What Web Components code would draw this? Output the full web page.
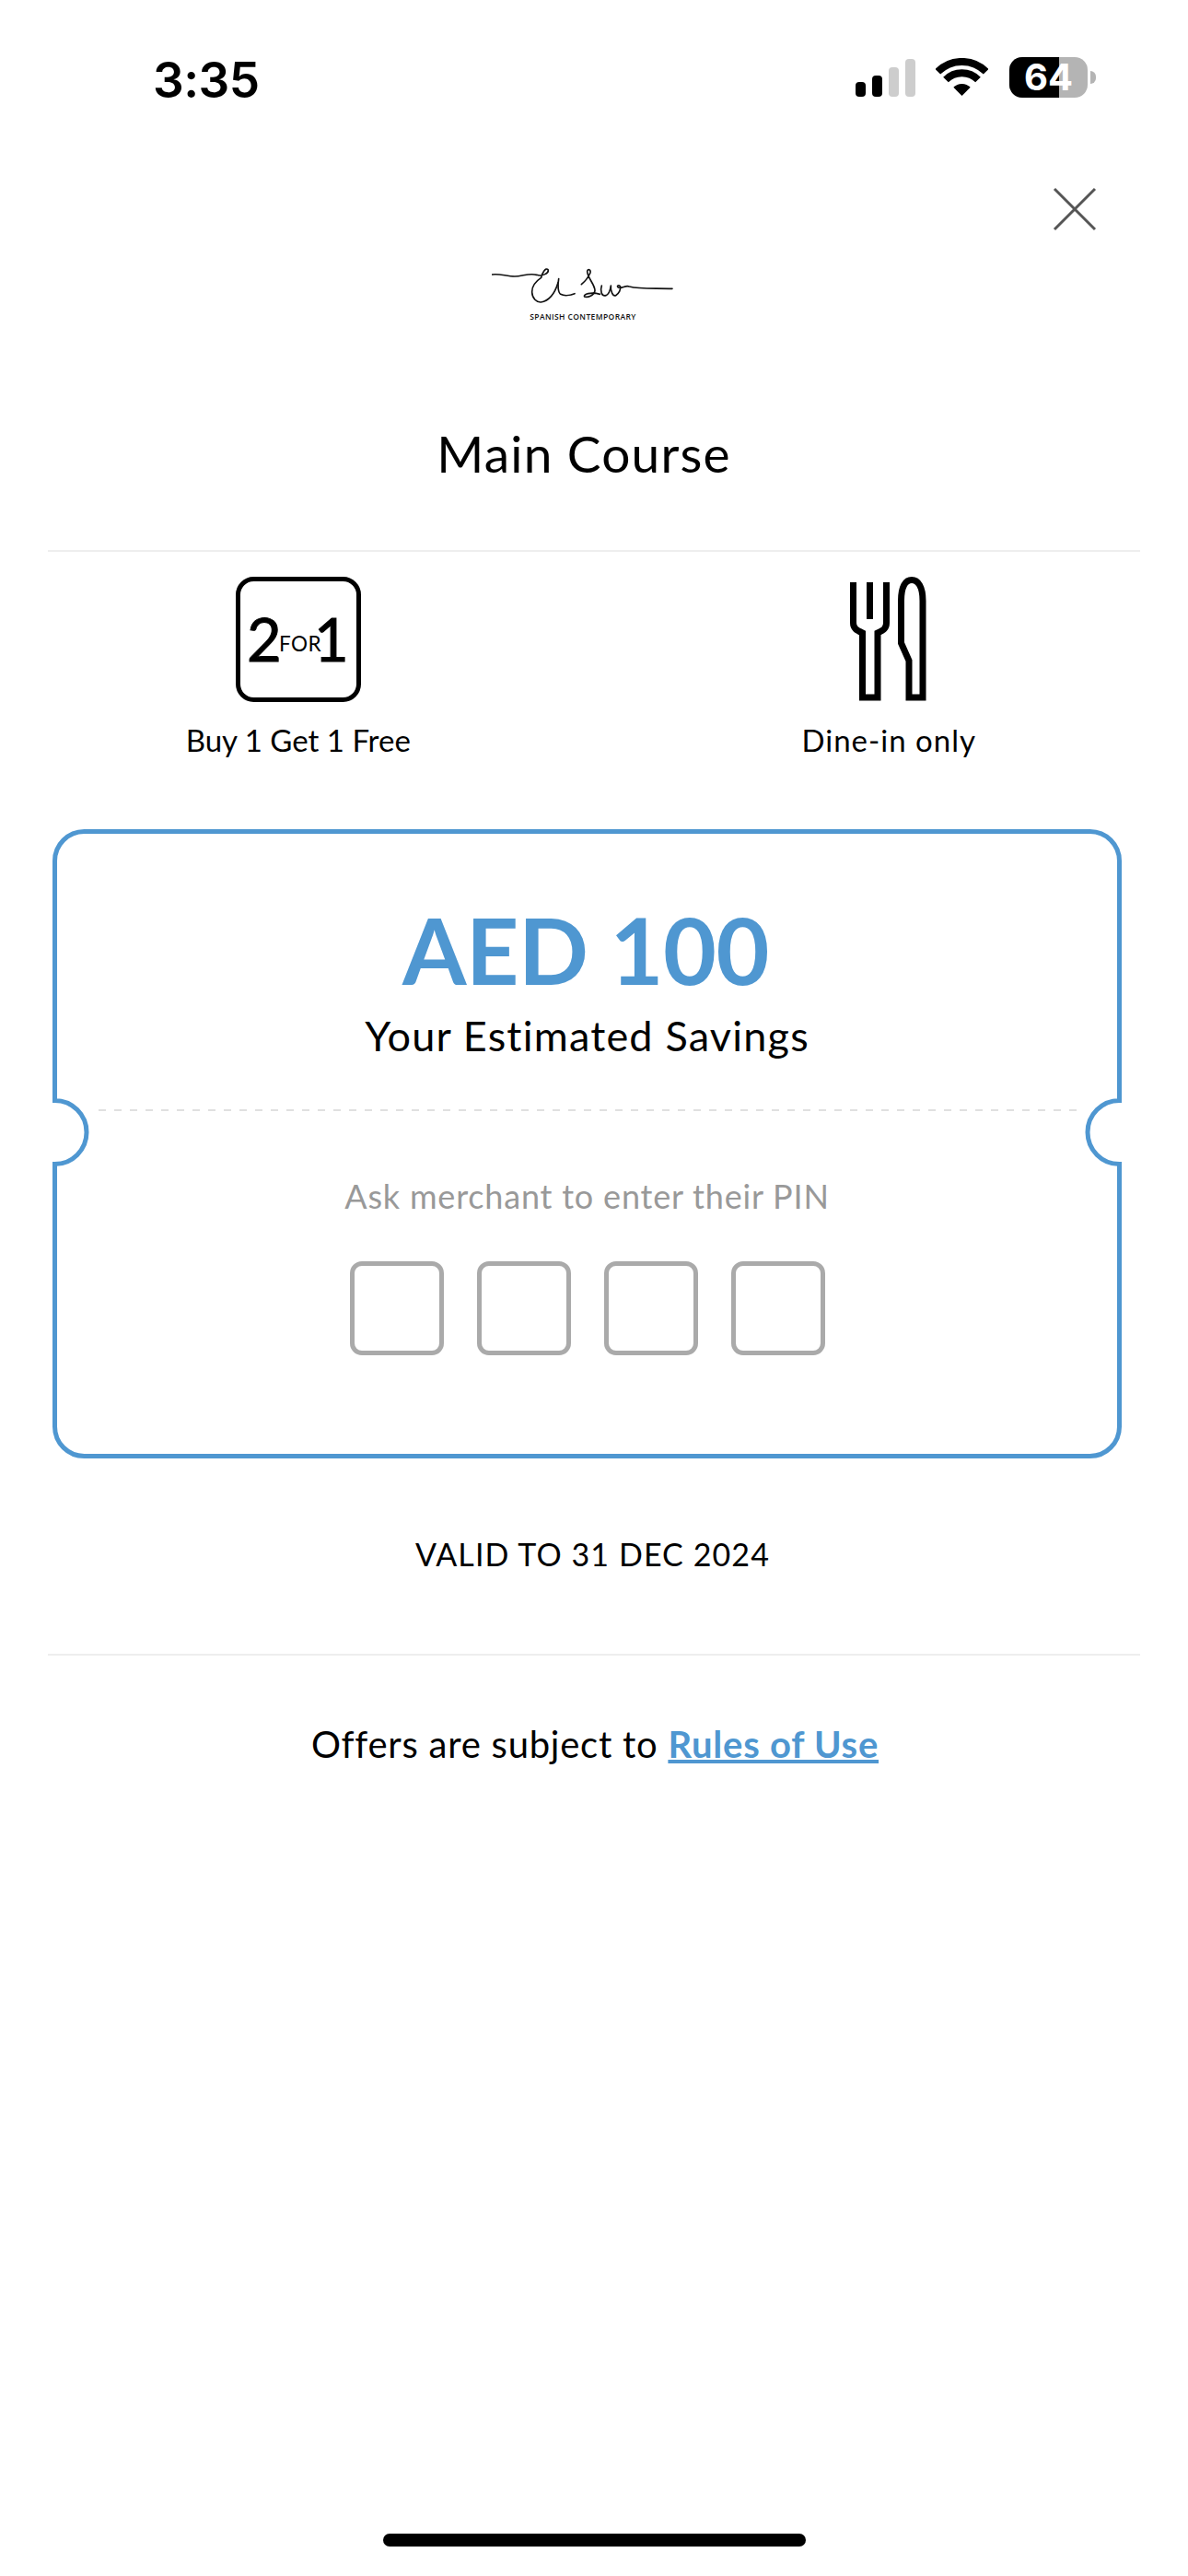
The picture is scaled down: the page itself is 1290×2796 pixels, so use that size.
<!DOCTYPE html>
<html lang="en">
<head>
<meta charset="utf-8">
<title>Main Course</title>
<style>
  html, body { margin: 0; background: #fff; }
  body { font-family: Lato, "Open Sans", sans-serif; color: #000; }
  offer-screen { width: 1290px; height: 2796px; }
</style>
</head>
<body>
<offer-screen>
  <status-bar time="3:35" battery="64"></status-bar>
  <offer-header title="Main Course"></offer-header>
  <offer-perks>
    <perk-item label="Buy 1 Get 1 Free">
      <svg width="136" height="136" viewBox="0 0 136 136">
        <rect x="2.500" y="2.500" width="131" height="131" rx="17" fill="none" stroke="#000" stroke-width="5"/>
        <text font-family="Lato, sans-serif" fill="#000" font-size="65" y="92"><tspan x="12" stroke="#000" stroke-width="1">2</tspan><tspan x="47" dy="-11" font-size="22.500" letter-spacing="0.500">FOR</tspan><tspan x="85" dy="11" stroke="#000" stroke-width="1">1</tspan></text>
      </svg>
    </perk-item>
    <perk-item label="Dine-in only" style="--label-spacing: 1px">
      <svg width="136" height="136" viewBox="0 0 136 136">
        <g fill="none" stroke="#000" stroke-width="7">
          <path d="M29.500 6V50C29.500 56 33 58 39.500 61V131H56V61C62.500 58 65.500 56 65.500 50V6"/>
          <path d="M47.500 6V46"/>
          <path d="M90 131V91L81.500 72V26C81.500 11 86 3.500 93 3.500C100 3.500 105 11 105 26V131Z"/>
        </g>
      </svg>
    </perk-item>
  </offer-perks>
  <offer-ticket amount="AED 100" caption="Your Estimated Savings" prompt="Ask merchant to enter their PIN">
    <pin-box></pin-box><pin-box></pin-box><pin-box></pin-box><pin-box></pin-box>
  </offer-ticket>
  <offer-footer valid="VALID TO 31 DEC 2024"></offer-footer>
  <home-indicator></home-indicator>
</offer-screen>

<script>
class OfferScreen extends HTMLElement {
  constructor() {
    super();
    this.attachShadow({ mode: 'open' });
    this.shadowRoot.innerHTML = `
      <style>
        :host { display: flex; flex-direction: column; position: relative; background: #fff; }
      </style>
      <slot></slot>
    `;
  }
}

class StatusBar extends HTMLElement {
  connectedCallback() {
    this.attachShadow({ mode: 'open' });
    this.shadowRoot.innerHTML = `
      <style>
        :host { display: flex; align-items: flex-start; justify-content: space-between; height: 120px; padding: 0 100px 0 166px; font-family: Inter, "Liberation Sans", sans-serif; }
        .time { font-size: 53px; font-weight: 600; line-height: 54px; margin-top: 60px; letter-spacing: -0.5px; }
        .icons { display: flex; align-items: flex-start; margin-top: 62px; }
        .signal { display: flex; align-items: flex-end; gap: 7px; height: 43px; margin-right: 22px; }
        .signal i { width: 11px; border-radius: 4px; background: #000; }
        .signal i.off { background: #cdcdcd; }
        .wifi { margin-top: 1px; margin-right: 23px; }
        .battery { position: relative; width: 85px; height: 44px; border-radius: 14px; background: #b4b4b4; color: #fff; font-size: 40px; font-weight: 700; line-height: 44px; }
        .battery b { position: absolute; left: 0; top: 0; bottom: 0; width: 54px; border-radius: 14px 0 0 14px; background: #000; }
        .battery span { position: relative; display: block; padding-left: 16px; }
        .tip { width: 6px; height: 14px; margin: 15px 0 0 3px; border-radius: 0 8px 8px 0; background: #b4b4b4; }
      </style>
      <div class="time">${this.getAttribute('time')}</div>
      <div class="icons">
        <div class="signal">
          <i style="height:16px"></i><i style="height:23px"></i><i class="off" style="height:32px"></i><i class="off" style="height:41px"></i>
        </div>
        <svg class="wifi" width="57" height="41" viewBox="0 0 57 41">
          <path d="M2.300 14.800A37 37 0 0 1 54.700 14.800M11 23.500A24.700 24.700 0 0 1 46 23.500" fill="none" stroke="#000" stroke-width="8"/>
          <path d="M28.500 41L19.300 31.800A13 13 0 0 1 37.700 31.800Z" fill="#000"/>
        </svg>
        <div class="battery"><b></b><span>${this.getAttribute('battery')}</span></div>
        <div class="tip"></div>
      </div>
    `;
  }
}

class OfferHeader extends HTMLElement {
  connectedCallback() {
    this.attachShadow({ mode: 'open' });
    this.shadowRoot.innerHTML = `
      <style>
        :host { display: flex; flex-direction: column; align-items: center; }
        .close { align-self: flex-end; display: block; margin: 83px 99px 0 0; }
        .logo { display: flex; flex-direction: column; align-items: center; margin: 39px 24px 0 0; }
        .logo svg { display: block; }
        .logo span { font-family: "Open Sans", sans-serif; font-size: 8.500px; line-height: 10px; letter-spacing: 0.400px; font-weight: 600; margin-top: -1px; color: #111; }
        h1 { margin: 111px 22px 0 0; font-size: 55px; font-weight: 400; line-height: 64px; letter-spacing: 1.200px; }
        hr { align-self: stretch; margin: 73px 52px 0; border: 0; height: 2px; background: #eeeeee; }
      </style>
      <svg class="close" width="48" height="48" viewBox="0 0 48 48">
        <path d="M2 2L46 46M46 2L2 46" stroke="#555" stroke-width="3" fill="none"/>
      </svg>
      <div class="logo">
        <svg width="198" height="50" viewBox="220 90 594 150" fill="none" stroke="#111" stroke-width="5" stroke-linecap="round" stroke-linejoin="round">
          <path d="M221 114C245 110 268 120 295 120C320 120 340 108 366 115C385 122 408 108 403 98C396 90 384 108 381 124C366 134 350 150 351 172C352 192 366 205 380 204C402 200 424 180 436 140"/>
          <path d="M438 128C434 150 436 172 444 178C456 184 476 182 490 176"/>
          <path d="M512 146C522 138 534 124 541 108C543 97 532 94 531 104C530 122 556 146 556 166C554 182 532 190 522 186C516 178 544 170 572 178"/>
          <path d="M578 150C572 168 578 186 592 182C602 178 606 164 608 150C606 166 614 186 624 182C634 176 642 162 638 152C632 146 626 152 632 156C645 160 655 148 668 153C700 162 750 158 808 160"/>
        </svg>
        <span>SPANISH CONTEMPORARY</span>
      </div>
      <h1>${this.getAttribute('title')}</h1>
      <hr>
    `;
  }
}

class OfferPerks extends HTMLElement {
  constructor() {
    super();
    this.attachShadow({ mode: 'open' });
    this.shadowRoot.innerHTML = `
      <style>
        :host { display: grid; grid-template-columns: 1fr 1fr; padding: 27px 4px 0 3px; height: 301px; box-sizing: border-box; }
      </style>
      <slot></slot>
    `;
  }
}

class PerkItem extends HTMLElement {
  connectedCallback() {
    this.attachShadow({ mode: 'open' });
    this.shadowRoot.innerHTML = `
      <style>
        :host { display: flex; flex-direction: column; align-items: center; }
        ::slotted(svg) { display: block; }
        .label { margin-top: 21px; font-size: 33px; line-height: 40px; letter-spacing: var(--label-spacing, 0); }
      </style>
      <slot></slot>
      <div class="label">${this.getAttribute('label')}</div>
    `;
  }
}

class OfferTicket extends HTMLElement {
  connectedCallback() {
    this.attachShadow({ mode: 'open' });
    this.shadowRoot.innerHTML = `
      <style>
        :host { display: flex; flex-direction: column; align-items: center; position: relative; box-sizing: border-box; width: 1161px; height: 683px; margin-left: 57px; padding-top: 70px; }
        .outline { position: absolute; left: 0; top: 0; }
        .amount { font-size: 100px; line-height: 120px; font-weight: 700; letter-spacing: -0.500px; margin-right: 3px; color: #4f97d1; }
        .caption { margin-top: 9px; font-size: 45px; line-height: 50px; letter-spacing: 1.200px; }
        .dash { align-self: stretch; height: 2px; margin: 55px 48px 0 50px; background: repeating-linear-gradient(90deg, #e0e0e0 0 8px, transparent 8px 17px); }
        .prompt { margin-top: 70px; font-size: 36px; line-height: 44px; letter-spacing: 0.800px; color: #999; }
        .pins { display: flex; gap: 36px; margin: 49px 0 0 0; }
      </style>
      <svg class="outline" width="1161" height="683" viewBox="0 0 1161 683" fill="none" stroke="#4f97d1" stroke-width="5">
        <path d="M34.500 2.500H1126.500A32 32 0 0 1 1158.500 34.500V294.500A34.500 34.500 0 0 0 1158.500 363.500V648.500A32 32 0 0 1 1126.500 680.500H34.500A32 32 0 0 1 2.500 648.500V363.500A34.500 34.500 0 0 0 2.500 294.500V34.500A32 32 0 0 1 34.500 2.500Z"/>
      </svg>
      <div class="amount">${this.getAttribute('amount')}</div>
      <div class="caption">${this.getAttribute('caption')}</div>
      <div class="dash"></div>
      <div class="prompt">${this.getAttribute('prompt')}</div>
      <div class="pins"><slot></slot></div>
    `;
  }
}

class PinBox extends HTMLElement {
  constructor() {
    super();
    this.attachShadow({ mode: 'open' });
    this.shadowRoot.innerHTML = `
      <style>
        :host { display: block; box-sizing: border-box; width: 102px; height: 102px; border: 5px solid #aaaaaa; border-radius: 13px; }
      </style>
    `;
  }
}

class OfferFooter extends HTMLElement {
  connectedCallback() {
    this.attachShadow({ mode: 'open' });
    this.shadowRoot.innerHTML = `
      <style>
        :host { display: flex; flex-direction: column; align-items: center; }
        .valid { margin: 84px 3px 0 0; font-size: 34px; line-height: 40px; letter-spacing: 1.100px; }
        hr { align-self: stretch; margin: 88px 52px 0; border: 0; height: 2px; background: #eeeeee; }
        .rules { margin: 73px 0 0 2px; font-size: 40px; line-height: 46px; letter-spacing: 0.750px; }
        a { color: #4f97d1; font-weight: 700; text-decoration: underline; }
      </style>
      <div class="valid">${this.getAttribute('valid')}</div>
      <hr>
      <div class="rules">Offers are subject to <a href="#">Rules of Use</a></div>
    `;
  }
}

class HomeIndicator extends HTMLElement {
  constructor() {
    super();
    this.attachShadow({ mode: 'open' });
    this.shadowRoot.innerHTML = `
      <style>
        :host { display: block; position: absolute; left: 416px; top: 2750px; width: 459px; height: 14px; border-radius: 7px; background: #000; }
      </style>
    `;
  }
}

customElements.define('offer-screen', OfferScreen);
customElements.define('status-bar', StatusBar);
customElements.define('offer-header', OfferHeader);
customElements.define('offer-perks', OfferPerks);
customElements.define('perk-item', PerkItem);
customElements.define('offer-ticket', OfferTicket);
customElements.define('pin-box', PinBox);
customElements.define('offer-footer', OfferFooter);
customElements.define('home-indicator', HomeIndicator);
</script>
</body>
</html>
